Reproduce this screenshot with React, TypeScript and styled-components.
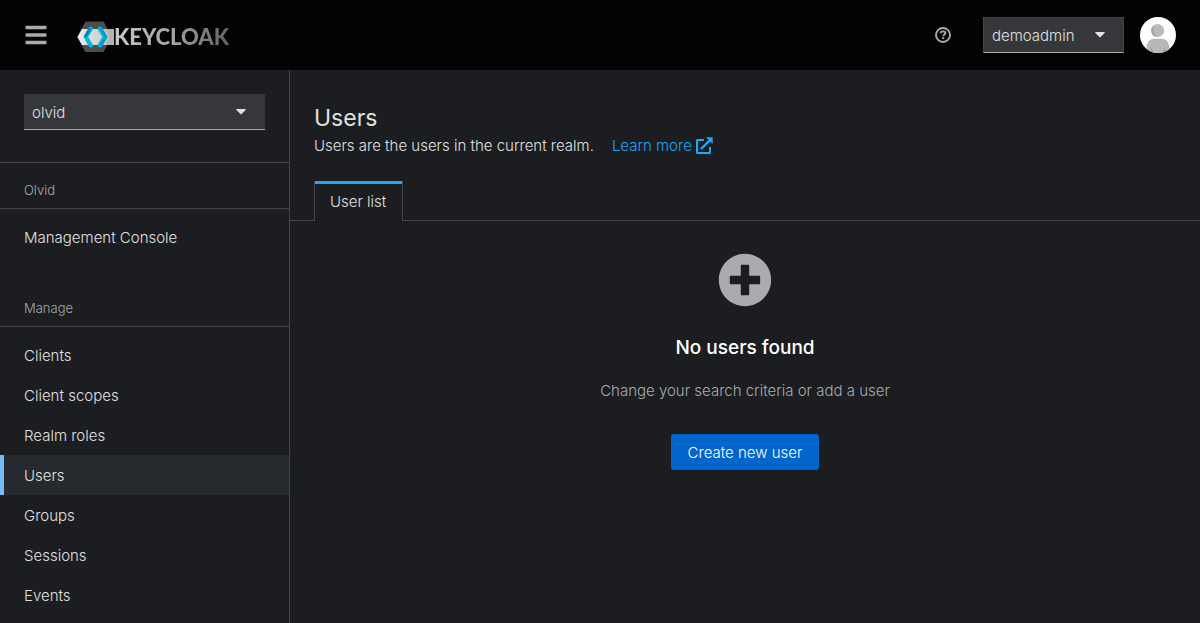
import React from 'react';
import styled, { createGlobalStyle } from 'styled-components';
import { FaBars, FaPlusCircle } from 'react-icons/fa';

const color = {
  page: '#1b1d21',
  line: '#444548',
  field: '#36373a',
  text: '#e0e0e0',
  muted: '#aaabac',
  link: '#1fa7f8',
  primary: '#0066cc',
};

const GlobalStyle = createGlobalStyle`
  *, *::before, *::after { box-sizing: border-box; }
  body {
    margin: 0;
    background: ${color.page};
    color: ${color.text};
    font-family: Inter, "Liberation Sans", sans-serif;
    font-size: 15px;
    font-weight: 300;
    line-height: 24px;
  }
  h1, h2, p, ul { margin: 0; padding: 0; }
  ul { list-style: none; }
  a { color: inherit; text-decoration: none; }
  button, select { font: inherit; color: inherit; border: 0; cursor: pointer; }
  svg { display: block; flex: none; }
`;

const Page = styled.div`
  display: flex;
  flex-direction: column;
  min-height: 100vh;
`;

const Masthead = styled.header`
  display: flex;
  align-items: center;
  height: 70px;
  padding: 0 24px;
  background: #030303;
`;

const IconButton = styled.button`
  display: flex;
  padding: 0;
  background: none;
  color: ${color.muted};
`;

const Brand = styled.a`
  display: flex;
  align-items: center;
  margin-left: 29px;
  padding-top: 4px;
`;

const Wordmark = styled.span`
  font-family: Lato, sans-serif;
  font-size: 22px;
  font-weight: 900;
  background: linear-gradient(90deg, #c9c9c9, #a5a5a5 50%, #626262);
  background-clip: text;
  color: transparent;
`;

const Tools = styled.div`
  display: flex;
  align-items: center;
  margin-left: auto;
`;

const HelpButton = styled(IconButton)`
  margin-right: 32px;
`;

const SelectWrap = styled.div<{ $width: string; $outlined?: boolean }>`
  display: grid;
  align-items: center;
  width: ${(p) => p.$width};
  height: 36px;
  background: ${color.field};
  border: ${(p) => (p.$outlined ? `1px solid ${color.line}` : '0')};
  border-bottom: 1px solid ${color.muted};

  > * { grid-area: 1 / 1; }
  > svg { justify-self: end; margin-right: ${(p) => (p.$outlined ? '18px' : '19px')}; pointer-events: none; }
`;

const Select = styled.select`
  width: 100%;
  height: 100%;
  padding: 2px 32px 0 8px;
  appearance: none;
  background: transparent;
`;

const Avatar = styled.svg`
  margin-left: 16px;
`;

const Body = styled.div`
  display: flex;
  flex: 1;
`;

const Sidebar = styled.aside`
  flex: none;
  width: 290px;
  border-right: 1px solid ${color.line};
`;

const RealmPicker = styled.div`
  padding: 24px 24px 32px;
  border-bottom: 1px solid ${color.line};
`;

const NavSection = styled.section`
  padding: 17px 0 8px;

  & + & { padding-top: 33px; }
`;

const NavTitle = styled.h2`
  padding: 0 24px 7px;
  margin-bottom: 8px;
  border-bottom: 1px solid ${color.line};
  color: ${color.muted};
  font-size: 13px;
  font-weight: 300;
  line-height: 21px;
`;

const NavLink = styled.a<{ $current?: boolean }>`
  display: block;
  padding: 9px 20px 7px;
  border-left: 4px solid ${(p) => (p.$current ? '#73bcf7' : 'transparent')};
  background: ${(p) => (p.$current ? '#26292d' : 'transparent')};
`;

const Main = styled.main`
  flex: 1;
  min-width: 0;
`;

const PageHead = styled.div`
  padding: 33px 24px 23px;
`;

const Title = styled.h1`
  font-size: 23px;
  font-weight: 400;
  line-height: 31px;
`;

const Lead = styled.div`
  display: flex;
  gap: 18px;
`;

const HelpLink = styled.a`
  display: flex;
  align-items: center;
  gap: 4px;
  color: ${color.link};

  svg { margin-bottom: 2px; }
`;

const Tabs = styled.div`
  display: flex;
  padding: 0 24px;
  border-bottom: 1px solid ${color.line};
`;

const Tab = styled.button`
  height: 40px;
  margin-bottom: -1px;
  padding: 2px 16px 0 15px;
  border: 1px solid ${color.line};
  border-width: 0 1px;
  background: ${color.page};
  box-shadow: inset 0 3px ${color.link};
`;

const EmptyState = styled.section`
  display: flex;
  flex-direction: column;
  align-items: center;
  padding: 32px;
  color: ${color.muted};
  text-align: center;
`;

const EmptyTitle = styled.h2`
  margin: 28px 0 18px;
  color: #fff;
  font-size: 19px;
  font-weight: 500;
  line-height: 26px;
`;

const PrimaryButton = styled.button`
  margin-top: 31px;
  padding: 7px 17px 5px;
  border-radius: 3px;
  background: ${color.primary};
  color: #fff;
`;

const Caret = () => (
  <svg width="10" height="6" viewBox="0 0 10 6" aria-hidden="true">
    <path d="M.8 0h8.4q1.100 0 .4.900L5.600 5.100q-.6.600-1.200 0L.4.900Q-.3 0 .8 0z" fill="#e0e0e0" />
  </svg>
);

const LogoMark = () => (
  <svg width="37" height="32" viewBox="0 0 37 32" aria-hidden="true">
    <defs>
      <linearGradient id="band" x1="0" x2="1">
        <stop offset="0" stopColor="#ececec" />
        <stop offset="1" stopColor="#c0c0c0" />
      </linearGradient>
    </defs>
    <path d="M8.500 .5H26.500L35 16 26.500 31H8.500L0 16z" fill="#4d4d4d" />
    <path d="M5 8H37V24H5L.5 16z" fill="url(#band)" />
    <path d="M28 8h9v16h-9l4.500-8z" fill="#b4b4b4" />
    <path d="M12.300 5.800h2.700L16.200 8 11.200 16 16.200 24 15 26.200H12.300L6.500 16z" fill="#00b8e3" />
    <path d="M12.300 5.800L14 8.600 9.600 16H6.500z" fill="#008aaa" />
    <path d="M21.800 5.800h2.700L30.500 16l-6 10.200H21.800L20.400 24 25.400 16l-5-8z" fill="#00b8e3" />
    <path d="M24.500 5.800L30.500 16l-6 10.200L23 23.700 27.600 16 23 8.300z" fill="#009bc2" />
  </svg>
);

const HelpIcon = () => (
  <svg width="16" height="16" viewBox="0 0 16 16" fill="none" aria-hidden="true">
    <circle cx="8" cy="8" r="7" stroke="currentColor" strokeWidth="1.900" />
    <path d="M5.600 6.300C5.700 4.900 6.700 4.400 8 4.400c1.400 0 2.400.7 2.400 1.800C10.400 7.600 8.300 7.500 8.300 9.200" stroke="currentColor" strokeWidth="1.900" />
    <path d="M7.200 10.200h2.100v1.900H7.200z" fill="currentColor" />
  </svg>
);

const ExternalIcon = () => (
  <svg width="17" height="17" viewBox="0 0 17 17" fill="none" stroke="currentColor" strokeWidth="2" aria-hidden="true">
    <path d="M8 3H1.500Q1 3 1 3.500V15.500Q1 16 1.500 16H13.500Q14 16 14 15.500V10" />
    <path d="M5 12L14 3" strokeWidth="2.400" />
    <path d="M10 .3H16.700V7z" fill="currentColor" stroke="none" />
  </svg>
);

const UserAvatar = () => (
  <Avatar width="36" height="36" viewBox="0 0 36 36" role="img" aria-label="Avatar">
    <clipPath id="round"><circle cx="18" cy="18" r="18" /></clipPath>
    <g clipPath="url(#round)">
      <rect width="36" height="36" fill="#fff" />
      <circle cx="17.700" cy="13.500" r="6.500" fill="#b8bbbe" />
      <path d="M14 8.200A6.500 6.500 0 0 0 17 20Q12.500 15 14 8.200z" fill="#a5a5a5" />
      <path d="M6.500 36V30Q7.500 22 14 21.800H22Q28.500 22 29.500 30V36z" fill="#b8b8b8" />
      <path d="M11.500 30L13.500 36H10zM24.500 30L22.500 36H26z" fill="#a0a0a0" />
    </g>
  </Avatar>
);

const sections = [
  { title: 'Olvid', items: ['Management Console'] },
  { title: 'Manage', items: ['Clients', 'Client scopes', 'Realm roles', 'Users', 'Groups', 'Sessions', 'Events'] },
];

export default function App() {
  return (
    <Page>
      <GlobalStyle />
      <Masthead>
        <IconButton aria-label="Global navigation"><FaBars size={24} /></IconButton>
        <Brand href="#home" aria-label="Keycloak">
          <LogoMark />
          <Wordmark>KEYCLOAK</Wordmark>
        </Brand>
        <Tools>
          <HelpButton aria-label="Help"><HelpIcon /></HelpButton>
          <SelectWrap $width="141px" $outlined>
            <Select aria-label="Account"><option>demoadmin</option></Select>
            <Caret />
          </SelectWrap>
          <UserAvatar />
        </Tools>
      </Masthead>
      <Body>
        <Sidebar>
          <RealmPicker>
            <SelectWrap $width="100%">
              <Select aria-label="Realm"><option>olvid</option></Select>
              <Caret />
            </SelectWrap>
          </RealmPicker>
          <nav aria-label="Global">
            {sections.map((section) => (
              <NavSection key={section.title}>
                <NavTitle>{section.title}</NavTitle>
                <ul>
                  {section.items.map((item) => (
                    <li key={item}>
                      <NavLink
                        href={`#${item.toLowerCase().replace(' ', '-')}`}
                        $current={item === 'Users'}
                        aria-current={item === 'Users' ? 'page' : undefined}
                      >
                        {item}
                      </NavLink>
                    </li>
                  ))}
                </ul>
              </NavSection>
            ))}
          </nav>
        </Sidebar>
        <Main>
          <PageHead>
            <Title>Users</Title>
            <Lead>
              <p>Users are the users in the current realm.</p>
              <HelpLink href="#learn-more">Learn more <ExternalIcon /></HelpLink>
            </Lead>
          </PageHead>
          <Tabs role="tablist">
            <Tab role="tab" aria-selected="true">User list</Tab>
          </Tabs>
          <EmptyState>
            <FaPlusCircle size={54} aria-hidden="true" />
            <EmptyTitle>No users found</EmptyTitle>
            <p>Change your search criteria or add a user</p>
            <PrimaryButton>Create new user</PrimaryButton>
          </EmptyState>
        </Main>
      </Body>
    </Page>
  );
}
